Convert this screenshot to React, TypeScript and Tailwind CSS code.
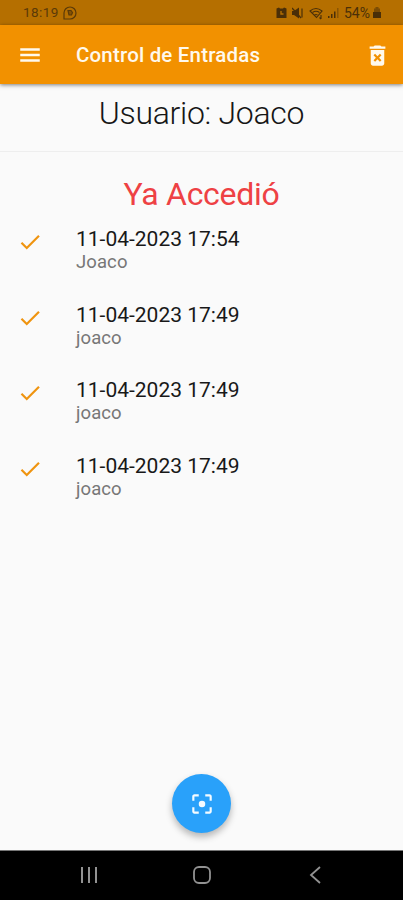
const entries = [
  { date: '11-04-2023 17:54', name: 'Joaco' },
  { date: '11-04-2023 17:49', name: 'joaco' },
  { date: '11-04-2023 17:49', name: 'joaco' },
  { date: '11-04-2023 17:49', name: 'joaco' },
];

function StatusBar() {
  return (
    <div className="flex h-[25px] shrink-0 items-center bg-[#b56f00] pl-[23px] pr-[22px] pt-[1px] text-[#5b3a08]">
      <span className="w-[37px] whitespace-nowrap text-[13.5px] leading-none tracking-[0.4px]">18:19</span>
      <svg className="ml-[3px] h-[14px] w-[14px]" viewBox="0 0 14 14" fill="none" stroke="currentColor" strokeWidth="1.2">
        <path d="M1 13V7a6 6 0 1 1 6 6H1Z" />
        <path d="M5 4.5h3l1.500 2-1 2.500H6Z" fill="currentColor" fillOpacity=".55" />
      </svg>
      <div className="ml-auto flex items-center text-[#4a2f08]">
        <svg className="h-[12px] w-[11px]" viewBox="0 0 11 12">
          <path d="M.5 1.500 3 .5l1 1h3l1-1 2.500 1v9.500H.5Z" fill="currentColor" />
          <path d="M5 4v3h2.500" fill="none" stroke="#b56f00" strokeWidth="1.400" />
        </svg>
        <svg className="ml-[5px] h-[12px] w-[13px]" viewBox="0 0 13 12" fill="none" stroke="currentColor">
          <path d="M0 4h2l5-3.500v11L2 8H0Z" fill="currentColor" stroke="none" />
          <path d="m0 1 9 10" strokeWidth="1.300" />
          <path d="M10 1.500v9" strokeWidth="1.200" />
        </svg>
        <svg className="ml-[4px] h-[13px] w-[16px]" viewBox="0 0 16 13" fill="none" stroke="currentColor" strokeWidth="1.100">
          <path d="M1 4Q7 -1 13 4L7.500 10.500Z" />
          <path d="M3.500 5.500Q7 3 10.500 5.500M5.500 8Q7 7 8.500 8" />
          <path d="M12 8v4m-1.500-1.500 1.500 1.500" />
        </svg>
        <svg className="ml-[3px] h-[12px] w-[12px]" viewBox="0 0 12 12" fill="currentColor">
          <path d="M0 9h1.500v2H0ZM3 7h1.500v4H3ZM6 4.500h1.500V11H6Z" />
          <path d="M9 1h1.500v10H9Z" opacity=".4" />
        </svg>
        <span className="ml-[4px] w-[27px] whitespace-nowrap text-[14px] leading-none">54%</span>
        <svg className="ml-[2px] h-[12px] w-[8px]" viewBox="0 0 8 12">
          <path d="M2.500 0h3v1.500H7V11H1V1.500h1.500Z" fill="currentColor" opacity=".55" />
          <path d="M0 5h8v6H0Z" fill="currentColor" />
        </svg>
      </div>
    </div>
  );
}

function AppBar() {
  return (
    <header className="z-10 flex h-[59px] shrink-0 items-center bg-[#f29100] pl-[17px] pr-[12px] pt-[1px] text-[#fff9ed] shadow-[0_1px_4px_rgba(0,0,0,0.5)]">
      <svg className="h-[26px] w-[26px]" viewBox="0 0 24 24" fill="currentColor">
        <path d="M3 18.300h18v-2.400H3v2.400zm0-5.100h18v-2.400H3v2.400zm0-7.500v2.400h18V5.700H3z" />
      </svg>
      <h1 className="ml-[33px] whitespace-nowrap text-[20.5px] font-medium leading-none tracking-[0.18px]">Control de Entradas</h1>
      <svg className="ml-auto h-[27px] w-[27px]" viewBox="0 0 24 24" fill="currentColor">
        <path d="M6 19c0 1.1.9 2 2 2h8c1.1 0 2-.9 2-2V7H6v12zm2.46-7.12l1.41-1.41L12 12.59l2.12-2.12 1.41 1.41L13.41 14l2.12 2.12-1.41 1.41L12 15.41l-2.12 2.12-1.41-1.41L10.59 14l-2.13-2.12zM15.5 4l-1-1h-5l-1 1H5v2h14V4z" />
      </svg>
    </header>
  );
}

export default function App() {
  return (
    <div className="flex h-[900px] w-[403px] flex-col overflow-hidden bg-[#fafafa] font-[Roboto,sans-serif]">
      <StatusBar />
      <AppBar />
      <main className="flex min-h-0 flex-1 flex-col">
        <h2 className="h-[68px] shrink-0 border-b border-[#eeeeee] pt-[10px] text-center text-[32px] font-light leading-[38px] tracking-[-0.3px] text-[#161616]">
          Usuario: Joaco
        </h2>
        <p className="mt-[23px] h-[38px] text-center text-[32px] leading-[38px] tracking-[-0.3px] text-[#ee4144]">Ya Accedió</p>
        <ul className="mt-[14px]">
          {entries.map((entry, i) => (
            <li key={i} className="flex h-[75.7px] pl-[17px]">
              <svg className="mt-[2px] h-[26px] w-[26px] shrink-0" viewBox="0 0 24 24" fill="#ef9410">
                <path d="M9 16.17 4.83 12l-1.42 1.41L9 19 21 7l-1.41-1.41z" />
              </svg>
              <div className="ml-[33px] whitespace-nowrap">
                <div className="text-[21px] leading-[24px] text-[#181818]">{entry.date}</div>
                <div className="text-[18.5px] leading-[22px] tracking-[0.1px] text-[#777777]">{entry.name}</div>
              </div>
            </li>
          ))}
        </ul>
        <button className="mb-[17px] ml-[172px] mt-auto flex h-[59px] w-[59px] shrink-0 items-center justify-center rounded-full bg-[#29a1fa] shadow-[0_4px_7px_rgba(0,0,0,0.28)]">
          <svg className="h-[26px] w-[26px]" viewBox="0 0 24 24" fill="#f4fbff">
            <circle cx="12" cy="12" r="3" />
            <path d="M5 15H3v4c0 1.100.9 2 2 2h4v-2H5v-4zM5 5h4V3H5c-1.100 0-2 .9-2 2v4h2V5zm14-2h-4v2h4v4h2V5c0-1.100-.9-2-2-2zm0 16h-4v2h4c1.100 0 2-.9 2-2v-4h-2v4z" />
          </svg>
        </button>
      </main>
      <nav className="flex h-[50px] shrink-0 items-center justify-between border-t border-[#777777] bg-black pb-[2px] pl-[80px] pr-[80px] text-[#929292]">
        <svg className="h-[18px] w-[18px]" viewBox="0 0 18 18" fill="none" stroke="currentColor" strokeWidth="2">
          <path d="M2 1v16M9 1v16M16 1v16" />
        </svg>
        <svg className="-ml-[2px] h-[20px] w-[20px]" viewBox="0 0 20 20" fill="none" stroke="currentColor" strokeWidth="1.800">
          <rect x="2" y="2" width="16" height="16" rx="5" />
        </svg>
        <svg className="h-[18px] w-[16px]" viewBox="0 0 16 18" fill="none" stroke="currentColor" strokeWidth="1.800">
          <path d="M13 1 4 9l9 8" />
        </svg>
      </nav>
    </div>
  );
}
